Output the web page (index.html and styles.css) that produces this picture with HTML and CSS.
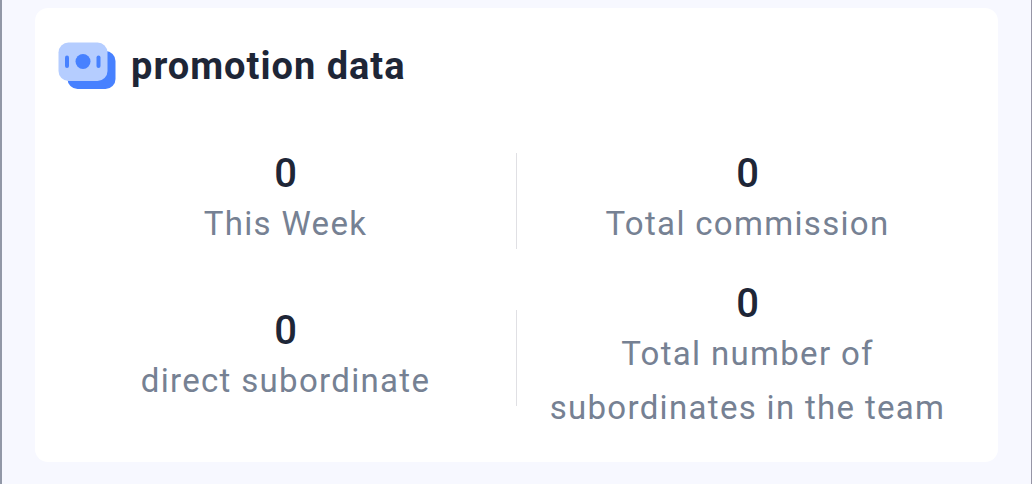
FILE: index.html
```html
<!DOCTYPE html>
<html lang="en">
<head>
<meta charset="utf-8">
<meta name="viewport" content="width=device-width, initial-scale=1">
<title>Promotion data</title>
<link rel="stylesheet" href="styles.css">
</head>
<body>
<main class="page">
  <section class="card">
    <header class="card-header">
      <svg class="card-icon" viewBox="0 0 58 48" aria-hidden="true">
        <rect x="8.500" y="9" width="48" height="38" rx="10" fill="#4781ff"/>
        <rect x="-0.500" y="0.500" width="49" height="38.500" rx="10" fill="#b5cdff"/>
        <circle cx="24" cy="19.500" r="7.500" fill="#4781ff"/>
        <rect x="6" y="13.500" width="4" height="12.500" rx="2" fill="#4781ff"/>
        <rect x="37.500" y="13.500" width="4" height="12.500" rx="2" fill="#4781ff"/>
      </svg>
      <h1 class="card-title">promotion data</h1>
    </header>
    <div class="stats">
      <div class="stat"><div class="value">0</div><div class="label">This Week</div></div>
      <div class="divider"></div>
      <div class="stat"><div class="value">0</div><div class="label">Total commission</div></div>
      <div class="stat"><div class="value">0</div><div class="label">direct subordinate</div></div>
      <div class="divider"></div>
      <div class="stat"><div class="value">0</div><div class="label">Total number of subordinates in the team</div></div>
    </div>
  </section>
</main>
</body>
</html>
```
FILE: styles.css
```css
* { box-sizing: border-box; }
body {
  margin: 0;
  font-family: Roboto, "Liberation Sans", sans-serif;
  background: #f7f8ff;
}
.page {
  min-height: 100vh;
  padding: 8px 33px 22px;
  border-left: 2px solid #9298a7;
  border-right: 1px solid #9796a6;
}
.card {
  padding: 31px 20px 27px;
  border-radius: 13px;
  background: #fff;
}
.card-header {
  display: flex;
  align-items: center;
  gap: 14px;
  padding-left: 4px;
}
.card-icon {
  width: 58px;
  height: 48px;
  overflow: visible;
}
.card-title {
  margin: 0;
  color: #1e2637;
  font-size: 38px;
  font-weight: 700;
  line-height: 54px;
  letter-spacing: 1px;
}
.stats {
  display: grid;
  grid-template-columns: 1fr 1px 1fr;
  align-items: center;
  row-gap: 30px;
  margin-top: 58px;
}
.stat { padding: 0 24px; text-align: center; }
.value {
  color: #1e2637;
  font-size: 40px;
  font-weight: 500;
  line-height: 46px;
}
.label {
  color: #768193;
  font-size: 33px;
  line-height: 54px;
  letter-spacing: 0.04em;
}
.divider { height: 96px; background: #e0e0e4; }
```
